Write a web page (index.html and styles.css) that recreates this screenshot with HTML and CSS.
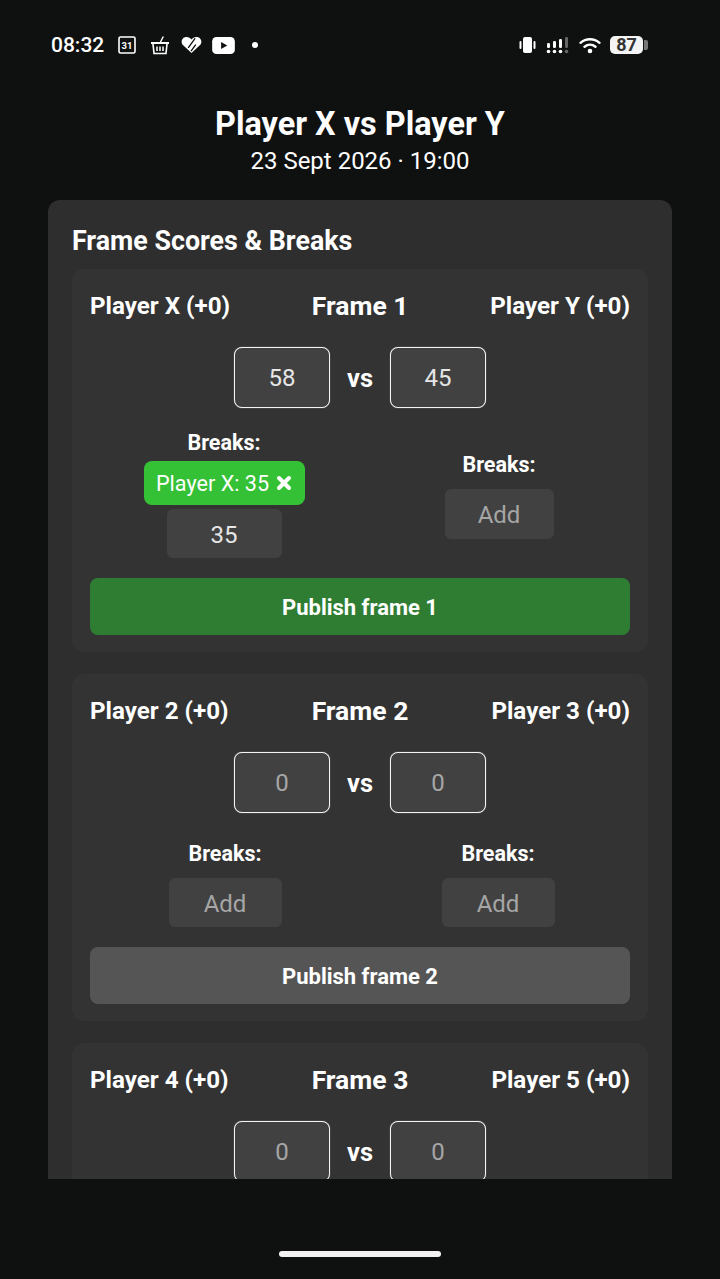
FILE: index.html
```html
<!DOCTYPE html>
<html lang="en">
<head>
    <meta charset="UTF-8">
    <meta name="viewport" content="width=device-width, initial-scale=1.0">
    <title>Match scores</title>
    <link rel="stylesheet" href="styles.css">
</head>
<body>
    <div class="status-bar">
        <div class="status-left">
            <span class="status-time">08:32</span>
            <svg class="icon-cal" viewBox="0 0 18 18"><rect x="1" y="1" width="16" height="16" rx="1.5" fill="none" stroke="#fff" stroke-width="1.6"/><text x="9" y="13" text-anchor="middle" class="icon-cal-text">31</text></svg>
            <svg class="icon-basket" viewBox="0 0 20 19"><path d="M13 1 10.500 6" fill="none" stroke="#fff" stroke-width="1.4" stroke-linecap="round"/><path d="M1 6h18v2H1z" fill="#fff"/><path d="M3 8l1 9.500h12L17 8" fill="none" stroke="#fff" stroke-width="1.6"/><path d="M7 10.500v4.500M10 10.500v4.500M13 10.500v4.500" stroke="#fff" stroke-width="1.5"/></svg>
            <svg class="icon-heart" viewBox="0 0 22 19"><path d="M11 18 2.200 9.800C-1 6.500.8 1 5.800 1 8 1 9.800 2 11 3.800 12.200 2 14 1 16.200 1c5 0 6.800 5.500 3.600 8.800z" fill="#fff"/><path d="M14.800 2.500 7.500 12.500M15.500 9 10.500 16" fill="none" stroke="#0f1110" stroke-width="1.4"/></svg>
            <svg class="icon-yt" viewBox="0 0 24 18"><rect width="24" height="18" rx="4.500" fill="#fff"/><path d="M9.500 5.200v7.600l6.500-3.800z" fill="#111"/></svg>
            <span class="status-dot"></span>
        </div>
        <div class="status-right">
            <svg class="icon-vibrate" viewBox="0 0 17 16"><rect x="4" y="0" width="9" height="16" rx="2" fill="#fff"/><rect x="0.500" y="4" width="2" height="8" rx="1" fill="#fff"/><rect x="14.500" y="4" width="2" height="8" rx="1" fill="#fff"/></svg>
            <svg class="icon-signal" viewBox="0 0 24 18"><g fill="#fff"><rect x="1" y="7" width="3" height="5" rx="1.200"/><rect x="7" y="5" width="3" height="7" rx="1.200"/><rect x="13" y="3" width="3" height="9" rx="1.200"/><circle cx="2.500" cy="15.500" r="1.800"/><circle cx="8.500" cy="15.500" r="1.800"/><circle cx="14.500" cy="15.500" r="1.800"/></g><g fill="#666"><rect x="19" y="1" width="3" height="11" rx="1.200"/><circle cx="20.500" cy="15.500" r="1.800"/></g></svg>
            <svg class="icon-wifi" viewBox="0 0 22 17"><g fill="none" stroke="#fff" stroke-width="2.400" stroke-linecap="round"><path d="M1.500 5.800C7 1 15 1 20.500 5.800"/><path d="M5.500 9.700c3.300-2.700 7.700-2.700 11 0"/></g><circle cx="11" cy="14" r="2.300" fill="#fff"/></svg>
            <div class="battery">
                <span class="battery-level">87</span>
                <span class="battery-cap"></span>
            </div>
        </div>
    </div>

    <header class="match-header">
        <h1>Player X vs Player Y</h1>
        <p>23 Sept 2026 · 19:00</p>
    </header>

    <main class="scores-panel">
        <h2>Frame Scores &amp; Breaks</h2>

        <section class="frame">
            <div class="frame-head">
                <span>Player X (+0)</span>
                <strong>Frame 1</strong>
                <span>Player Y (+0)</span>
            </div>
            <div class="score-row">
                <input class="score-input" type="text" value="58">
                <span class="vs">vs</span>
                <input class="score-input" type="text" value="45">
            </div>
            <div class="breaks-row breaks-row-tight">
                <div class="breaks-col">
                    <label>Breaks:</label>
                    <span class="break-chip">Player X: 35
                        <svg class="chip-x" viewBox="0 0 16 16"><path d="M3 3l10 10M13 3 3 13" stroke="#fff" stroke-width="4" stroke-linecap="round"/></svg>
                    </span>
                    <input class="break-input break-input-left" type="text" value="35">
                </div>
                <div class="breaks-col">
                    <label>Breaks:</label>
                    <input class="break-input break-input-narrow" type="text" placeholder="Add">
                </div>
            </div>
            <button class="publish publish-ready" type="button">Publish frame 1</button>
        </section>

        <section class="frame">
            <div class="frame-head">
                <span>Player 2 (+0)</span>
                <strong>Frame 2</strong>
                <span>Player 3 (+0)</span>
            </div>
            <div class="score-row">
                <input class="score-input" type="text" placeholder="0">
                <span class="vs">vs</span>
                <input class="score-input" type="text" placeholder="0">
            </div>
            <div class="breaks-row">
                <div class="breaks-col">
                    <label>Breaks:</label>
                    <input class="break-input" type="text" placeholder="Add">
                </div>
                <div class="breaks-col">
                    <label>Breaks:</label>
                    <input class="break-input" type="text" placeholder="Add">
                </div>
            </div>
            <button class="publish" type="button">Publish frame 2</button>
        </section>

        <section class="frame">
            <div class="frame-head">
                <span>Player 4 (+0)</span>
                <strong>Frame 3</strong>
                <span>Player 5 (+0)</span>
            </div>
            <div class="score-row">
                <input class="score-input" type="text" placeholder="0">
                <span class="vs">vs</span>
                <input class="score-input" type="text" placeholder="0">
            </div>
        </section>
    </main>

    <div class="home-area">
        <span class="home-bar"></span>
    </div>
</body>
</html>
```

FILE: styles.css
```css
:root {
    box-sizing: border-box;
}
*,
::before,
::after {
    box-sizing: inherit;
}
body {
    margin: 0;
    width: 720px;
    height: 1279px;
    overflow: hidden;
    display: flex;
    flex-direction: column;
    background-color: #0f1110;
    color: #fff;
    font-family: Roboto, "Liberation Sans", sans-serif;
}

/* status bar */
.status-bar {
    height: 90px;
    flex: none;
    display: flex;
    justify-content: space-between;
    align-items: center;
    padding: 0 72px 0 51px;
}
.status-left,
.status-right {
    display: flex;
    align-items: center;
}
.status-time {
    width: 54px;
    font-size: 21px;
    font-weight: 500;
    margin-right: 13px;
}
.icon-cal {
    width: 18px;
    height: 18px;
    margin-right: 14px;
}
.icon-cal-text {
    font-size: 9.5px;
    font-weight: 700;
    fill: #fff;
}
.icon-basket {
    width: 20px;
    height: 19px;
    margin-right: 11px;
}
.icon-heart {
    width: 21px;
    height: 18px;
    margin-right: 10px;
}
.icon-yt {
    width: 23px;
    height: 17px;
    margin-right: 17px;
}
.status-dot {
    width: 6px;
    height: 6px;
    border-radius: 50%;
    background-color: #fff;
}
.icon-vibrate {
    width: 17px;
    height: 16px;
    margin-right: 10px;
}
.icon-signal {
    width: 24px;
    height: 18px;
    margin-right: 9px;
}
.icon-wifi {
    width: 22px;
    height: 17px;
    margin-right: 9px;
}
.battery {
    display: flex;
    align-items: center;
}
.battery-level {
    width: 33px;
    height: 18px;
    border-radius: 5px;
    background-color: #f4f4f4;
    color: #333;
    font-size: 18px;
    font-weight: 700;
    line-height: 18px;
    text-align: center;
}
.battery-cap {
    width: 4px;
    height: 10px;
    margin-left: 1px;
    border-radius: 0 2px 2px 0;
    background-color: #777;
}

/* heading */
.match-header {
    flex: none;
    height: 110px;
    padding-top: 16px;
    text-align: center;
}
.match-header h1 {
    margin: 0;
    font-size: 32.4px;
    font-weight: 700;
    line-height: 37px;
}
.match-header p {
    margin: 0;
    font-size: 24px;
    font-weight: 400;
    line-height: 36px;
}

/* panel */
.scores-panel {
    flex: none;
    height: 979px;
    margin: 0 48px;
    padding: 25px 24px 0;
    overflow: hidden;
    border-radius: 12px 12px 0 0;
    background-color: #2e2e2e;
}
.scores-panel h2 {
    margin: 0 0 12px;
    font-size: 26.8px;
    font-weight: 700;
    line-height: 32px;
}
.frame {
    margin-bottom: 22px;
    padding: 17px 18px;
    border-radius: 12px;
    background-color: #333;
}
.frame-head {
    display: flex;
    justify-content: space-between;
    align-items: center;
    height: 38px;
    padding-top: 1px;
    font-size: 24.2px;
    font-weight: 700;
}
.frame-head strong {
    font-size: 26.5px;
    font-weight: 700;
}
.score-row {
    display: flex;
    justify-content: center;
    align-items: center;
    gap: 17px;
    margin-top: 23px;
}
input {
    font-family: inherit;
    color: #e6e6e6;
    text-align: center;
    outline: none;
}
input::placeholder {
    color: #a6a6a6;
    opacity: 1;
}
.score-input {
    width: 96px;
    height: 61px;
    padding-top: 2px;
    border: 1px solid #f4f4f4;
    border-radius: 8px;
    background-color: #414141;
    box-shadow: 0 0 1px rgba(255, 255, 255, .7);
    font-size: 24px;
}
.vs {
    font-size: 25.5px;
    font-weight: 700;
}
.breaks-row {
    display: flex;
    justify-content: space-between;
    align-items: center;
    margin-top: 29px;
    padding: 0 52px 0 55px;
}
.breaks-row-tight {
    margin-top: 23px;
    padding: 0 51px 0 54px;
}
.breaks-col {
    width: 160px;
    display: flex;
    flex-direction: column;
    align-items: center;
}
.breaks-col label {
    font-size: 21.5px;
    font-weight: 700;
    line-height: 24px;
    margin-bottom: 12px;
}
.break-chip {
    display: flex;
    align-items: center;
    justify-content: center;
    gap: 7px;
    width: 161px;
    height: 44px;
    margin-top: -6px;
    border-radius: 8px;
    background-color: #35c135;
    font-size: 21.6px;
}
.chip-x {
    width: 16px;
    height: 16px;
}
.break-input {
    width: 113px;
    height: 49px;
    padding-top: 4px;
    border: none;
    border-radius: 6px;
    background-color: #414141;
    font-size: 24px;
}
.break-input-left {
    width: 115px;
    margin-top: 4px;
}
.break-input-narrow {
    width: 109px;
    height: 50px;
    margin-bottom: -2px;
}
.publish {
    display: block;
    width: 100%;
    height: 57px;
    margin-top: 20px;
    padding-top: 3px;
    border: none;
    border-radius: 8px;
    background-color: #555;
    color: #fff;
    font-family: inherit;
    font-size: 22px;
    font-weight: 700;
}
.publish-ready {
    background-color: #2e7d32;
}

/* gesture bar */
.home-area {
    flex: 1;
    display: flex;
    justify-content: center;
    padding-top: 72px;
}
.home-bar {
    width: 162px;
    height: 6px;
    border-radius: 3px;
    background-color: #f2f2f2;
}
```
